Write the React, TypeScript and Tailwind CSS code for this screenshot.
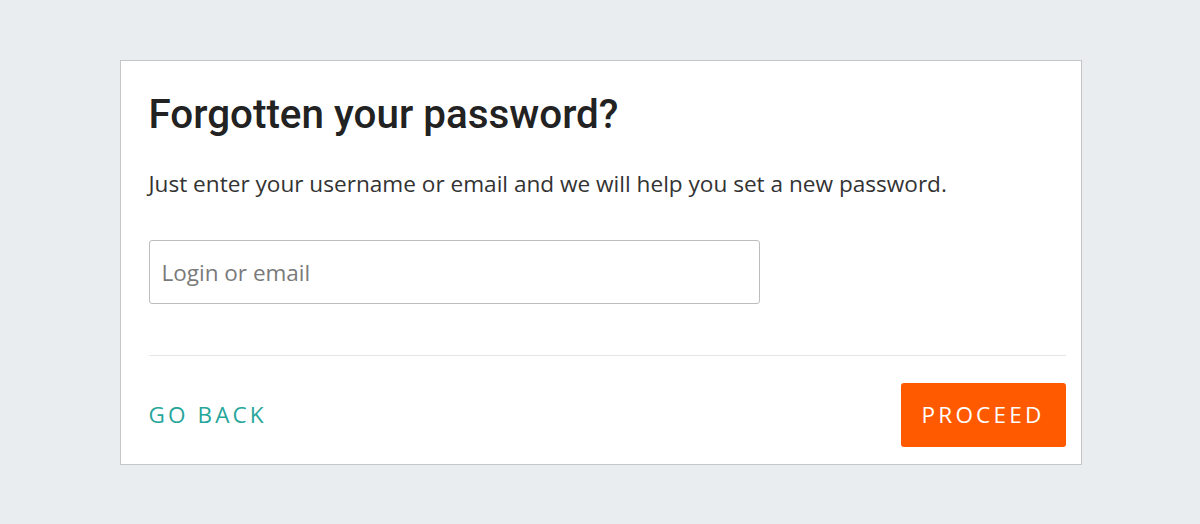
import React from "react";

export default function App() {
  return (
    <div className="min-h-[524px] w-full bg-[#e9edf0] flex justify-center pt-[60px]">
      <div className="w-[962px] h-[405px] ml-px bg-white border border-[#c4c6c8] pl-[28px] pr-[15px] pt-[30px]">
        <h1 className="font-['Roboto',sans-serif] font-medium text-[40.4px] leading-[48px] text-[#222222]">
          Forgotten your password?
        </h1>
        <p className="mt-[30px] font-['Open_Sans',sans-serif] text-[22.6px] leading-[30px] text-[#333333]">
          Just enter your username or email and we will help you set a new password.
        </p>
        <input
          type="text"
          placeholder="Login or email"
          className="mt-[41px] block w-[611px] h-[64px] border border-[#bdbdbd] rounded-[3px] px-[12px] font-['Open_Sans',sans-serif] text-[22.5px] text-[#333333] placeholder:text-[#7a7a7a] outline-none"
        />
        <div className="mt-[51px] h-px bg-[#e6e6e6]" />
        <div className="mt-[27px] flex items-center justify-between">
          <button className="font-['Open_Sans',sans-serif] text-[22.5px] tracking-[3.1px] text-[#26a69a] uppercase">
            Go back
          </button>
          <button className="w-[165px] h-[64px] rounded-[3px] bg-[#ff5a00] font-['Open_Sans',sans-serif] text-[22.5px] tracking-[3.2px] text-white uppercase">
            Proceed
          </button>
        </div>
      </div>
    </div>
  );
}
